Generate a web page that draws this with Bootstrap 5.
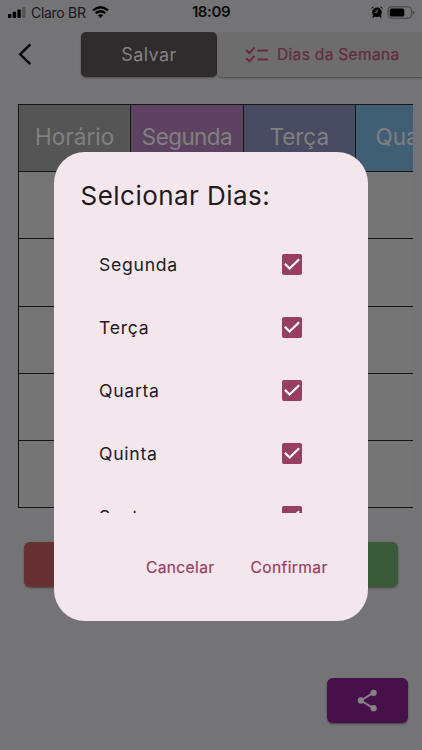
<!DOCTYPE html>
<html lang="pt-BR">
<head>
<meta charset="utf-8">
<meta name="viewport" content="width=device-width, initial-scale=1">
<title>Horário</title>
<link href="https://cdn.jsdelivr.net/npm/bootstrap@5.3.0/dist/css/bootstrap.min.css" rel="stylesheet">
<style>
body{font-family:Inter,"Liberation Sans",sans-serif;background:#747476;color:#0b0b0c;width:422px;height:750px;overflow:hidden}
svg{display:block;flex:none}
.status{height:24px;padding:0 7px 0 8px;font-size:14px}
.carrier{letter-spacing:-.3px;margin-left:5px;margin-right:6px;color:#19191a}
.clock{font-size:15px;font-weight:600;left:0;right:0;top:0;line-height:24px;letter-spacing:-.4px}
.tools{height:65px;padding:8px 0 0 18px}
.tool{height:45px;border-radius:5px;box-shadow:0 1px 2px rgba(0,0,0,.35)}
.save{width:136px;margin-left:48px;background:#302c2d;color:#858283;font-size:18px;letter-spacing:.4px}
.days{width:215px;margin-right:-12px;background:#6d6d6d;color:#652a40;font-size:15.6px;letter-spacing:.28px;-webkit-text-stroke:.2px #652a40;padding-left:28px}
.grid{margin:15px 9px 0 18px;height:404px;border-left:1px solid #161616;border-top:1px solid #161616;background:#757575;overflow:hidden}
.line{height:67.2px;border-bottom:1px solid #161616}
.slot{width:112.3px;border-right:1px solid #15151b;color:#808080;font-size:22.5px;line-height:64px;text-align:center;flex:none}
.c-hour{background:#555}.c-seg{background:#5e4262;letter-spacing:-.6px}.c-ter{background:#484b62}.c-qua{background:#405e74}
.actions{margin:34px 24px 0}
.act{width:112px;height:45px;border-radius:6px;box-shadow:0 1px 2px rgba(0,0,0,.4)}
.a-red{background:#673134}.a-green{background:#3a5a39}
.share{width:81px;height:45px;margin:91px 14px 0 0;border-radius:6px;background:#46104a;box-shadow:0 1px 2px rgba(0,0,0,.45)}
.sheet{left:53.6px;top:151.7px;width:314.6px;height:469.3px;border-radius:31px;background:#f3e6ec;color:#211a1d;padding:27px 27px 0}
.sheet h1{font-size:26px;font-weight:400;line-height:34px;margin:0;letter-spacing:.45px}
.choices{height:280px;margin-top:20.3px;overflow:hidden;padding:0 39px 0 18.5px}
.choice{height:63px;font-size:17.6px;letter-spacing:.7px}
.choice span:first-child{padding-top:2px}
.tick{width:20.5px;height:20.5px;border-radius:2px;background:#963f60;flex:none}
.replies{height:46px;margin-top:32px;padding-right:13.5px;gap:36px}
.reply{color:#963f60;font-size:15.6px;letter-spacing:.36px;-webkit-text-stroke:.2px #963f60}
</style>
</head>
<body class="position-relative">
<header class="status d-flex align-items-center position-relative">
  <svg width="18" height="11" viewBox="0 0 18 11"><rect y="7" width="3.4" height="4" rx=".7"/><rect x="4.7" y="4.8" width="3.4" height="6.2" rx=".7"/><rect x="9.4" y="2.5" width="3.4" height="8.5" rx=".7"/><rect x="14.1" width="3.4" height="11" rx=".7" fill="#555556"/></svg>
  <span class="carrier">Claro BR</span>
  <svg width="17" height="12" viewBox="0 0 17 12" fill="none" stroke="#000" stroke-width="2.3"><path d="M1 4.4Q8.5-2 16 4.4M3.7 7.2q4.8-3.9 9.6 0"/><path d="M5.9 9.2q2.6-1.9 5.2 0L8.5 12z" fill="#000" stroke="none"/></svg>
  <span class="clock position-absolute text-center">18:09</span>
  <svg class="ms-auto" width="12" height="12" viewBox="0 0 12 12"><circle cx="6" cy="6.3" r="4.8"/><path d="M.4 3.2Q.5.6 3.2.5zM11.6 3.2Q11.5.6 8.8.5zM2 9l2 1.2L2.4 12l-1-.8zM10 9l-2 1.2L9.6 12l1-.8z"/><path d="M6.1 3.4v3H3.8" fill="none" stroke="#747476"/></svg>
  <svg class="ms-1" width="28" height="13" viewBox="0 0 28 13"><rect x="1" y=".8" width="23.4" height="11.4" rx="3" fill="none" stroke="#414142"/><rect x="2.7" y="2.4" width="14.6" height="8.2" rx="1.6"/><path d="M25.8 4.5q1.6.4 1.6 2t-1.6 2z" fill="#414142"/></svg>
</header>
<nav class="tools d-flex">
  <svg class="mt-2" width="15" height="28" viewBox="0 0 15 28" fill="none" stroke="#0b0b0c" stroke-width="2.5"><path d="M12.3 4.4 2.2 14.3l10.1 9.9"/></svg>
  <div class="tool save d-flex align-items-center justify-content-center">Salvar</div>
  <div class="tool days d-flex align-items-center flex-shrink-0">
    <svg width="24" height="18" viewBox="0 0 24 18" fill="none" stroke="#652a40" stroke-width="2"><path d="m1.2 4 3.1 3.1 5.3-5.5M1.2 12.3l3.1 3.1 5.3-5.5M12.5 4.5H23M12.5 13.5H23"/></svg>
    <span class="ms-2 text-nowrap">Dias da Semana</span>
  </div>
</nav>
<main>
  <section class="grid">
    <div class="line d-flex"><div class="slot c-hour">Horário</div><div class="slot c-seg">Segunda</div><div class="slot c-ter">Terça</div><div class="slot c-qua">Quarta</div></div>
    <div class="line"></div><div class="line"></div><div class="line"></div><div class="line"></div><div class="line"></div>
  </section>
  <div class="actions d-flex justify-content-between"><div class="act a-red"></div><div class="act a-green"></div></div>
  <div class="share ms-auto d-flex align-items-center justify-content-center">
    <svg width="21" height="23" viewBox="0 0 22 24" fill="#858187"><path d="M17 4 4 12l13 8" fill="none" stroke="#858187" stroke-width="2"/><circle cx="17.4" cy="4" r="3.3"/><circle cx="4" cy="12" r="3.3"/><circle cx="17.4" cy="20" r="3.3"/></svg>
  </div>
</main>
<div class="sheet position-absolute" role="dialog">
  <h1 class="text-nowrap">Selcionar Dias:</h1>
  <div class="choices">
    <div class="choice d-flex align-items-center justify-content-between"><span>Segunda</span><span class="tick"><svg width="20" height="20" viewBox="0 0 21 21" fill="none" stroke="#fff" stroke-width="2.2"><path d="m3 10.3 5 5L18 5.4"/></svg></span></div>
    <div class="choice d-flex align-items-center justify-content-between"><span>Terça</span><span class="tick"><svg width="20" height="20" viewBox="0 0 21 21" fill="none" stroke="#fff" stroke-width="2.2"><path d="m3 10.3 5 5L18 5.4"/></svg></span></div>
    <div class="choice d-flex align-items-center justify-content-between"><span>Quarta</span><span class="tick"><svg width="20" height="20" viewBox="0 0 21 21" fill="none" stroke="#fff" stroke-width="2.2"><path d="m3 10.3 5 5L18 5.4"/></svg></span></div>
    <div class="choice d-flex align-items-center justify-content-between"><span>Quinta</span><span class="tick"><svg width="20" height="20" viewBox="0 0 21 21" fill="none" stroke="#fff" stroke-width="2.2"><path d="m3 10.3 5 5L18 5.4"/></svg></span></div>
    <div class="choice d-flex align-items-center justify-content-between"><span>Sexta</span><span class="tick"><svg width="20" height="20" viewBox="0 0 21 21" fill="none" stroke="#fff" stroke-width="2.2"><path d="m3 10.3 5 5L18 5.4"/></svg></span></div>
  </div>
  <div class="replies d-flex align-items-center justify-content-end"><span class="reply">Cancelar</span><span class="reply">Confirmar</span></div>
</div>
<script src="https://cdn.jsdelivr.net/npm/bootstrap@5.3.0/dist/js/bootstrap.bundle.min.js"></script>
</body>
</html>
